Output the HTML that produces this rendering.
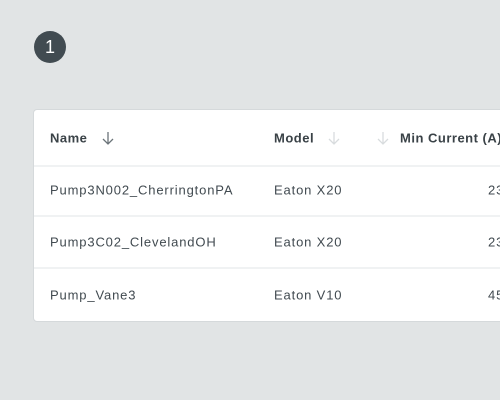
<!DOCTYPE html><html><head><style>
body{margin:0;width:500px;height:400px;background:#e1e4e5;font-family:"Liberation Sans",sans-serif;overflow:hidden;position:relative;color:#414a50}
.c{position:absolute;left:34px;top:31px;width:32px;height:32px;border-radius:50%;background:#414b51;color:#fff;font-size:18px;line-height:32px;text-align:center}
.card{position:absolute;left:33px;top:109px;width:500px;height:211px;background:#fff;border:1px solid #d5d9db;border-radius:4px}
.r{position:absolute;left:0;width:100%;height:52px;border-bottom:2px solid #f0f2f3;font-size:13px;letter-spacing:0.85px}
.r span{position:absolute;top:50%;transform:translateY(-50%);white-space:nowrap}
.h{font-weight:bold;color:#3a4247;height:55px;letter-spacing:0.5px}
svg{position:absolute;top:21px}
</style></head><body>
<div class="c">1</div>
<div class="card">
<div class="r h" style="top:0"><span style="left:16px">Name</span>
<svg style="left:67px" width="14" height="14" viewBox="0 0 14 14"><path d="M7 1v12M2 8l5 5 5-5" fill="none" stroke="#6b7479" stroke-width="1.3"/></svg>
<span style="left:240px">Model</span>
<svg style="left:293px" width="14" height="14" viewBox="0 0 14 14"><path d="M7 1v12M2 8l5 5 5-5" fill="none" stroke="#d8dcde" stroke-width="1.3"/></svg>
<svg style="left:342px" width="14" height="14" viewBox="0 0 14 14"><path d="M7 1v12M2 8l5 5 5-5" fill="none" stroke="#d8dcde" stroke-width="1.3"/></svg>
<span style="left:366px">Min Current (A)</span></div>
<div class="r" style="top:55px;height:50px"><span style="left:16px">Pump3N002_CherringtonPA</span><span style="left:240px">Eaton X20</span><span style="left:454px">23</span></div>
<div class="r" style="top:107px;height:50px"><span style="left:16px">Pump3C02_ClevelandOH</span><span style="left:240px">Eaton X20</span><span style="left:454px">23</span></div>
<div class="r" style="top:159px;height:52px;border:none"><span style="left:16px">Pump_Vane3</span><span style="left:240px">Eaton V10</span><span style="left:454px">45</span></div>
</div>
</body></html>
